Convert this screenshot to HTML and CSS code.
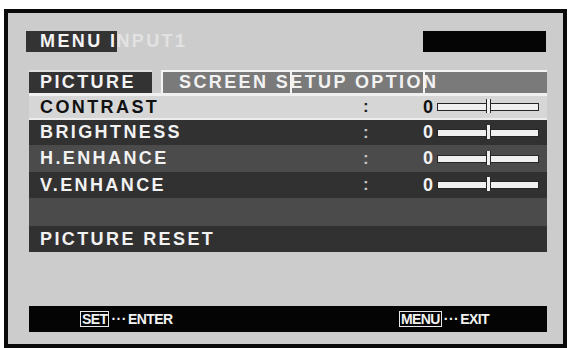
FILE: index.html
```html
<!DOCTYPE html>
<html>
<head>
<meta charset="utf-8">
<link rel="stylesheet" href="styles.css">
</head>
<body>
<div class="frame">
  <div class="header">
    <div class="title"><span class="title-on">MENU I</span><span class="title-off">NPUT1</span></div>
    <div class="blackbox"></div>
  </div>
  <div class="tabs">
    <div class="tab tab-active">PICTURE</div>
    <div class="tab-strip">
      <span class="strip-text">SCREEN SETUP OPTION</span>
      <span class="divider d1"></span>
      <span class="divider d2"></span>
    </div>
  </div>
  <div class="rows">
    <div class="row row-sel h24">
      <span class="label">CONTRAST</span><span class="colon">:</span><span class="val">0</span><span class="slider"><span class="thumb"></span></span>
    </div>
    <div class="row row-dark h25">
      <span class="label">BRIGHTNESS</span><span class="colon">:</span><span class="val">0</span><span class="slider"><span class="thumb"></span></span>
    </div>
    <div class="row row-mid h27">
      <span class="label">H.ENHANCE</span><span class="colon">:</span><span class="val">0</span><span class="slider"><span class="thumb"></span></span>
    </div>
    <div class="row row-dark h26">
      <span class="label">V.ENHANCE</span><span class="colon">:</span><span class="val">0</span><span class="slider"><span class="thumb"></span></span>
    </div>
    <div class="row row-mid h28"></div>
    <div class="row row-dark h26">
      <span class="label">PICTURE RESET</span>
    </div>
  </div>
  <div class="footer">
    <div class="hint"><span class="key">SET</span><span class="dots">···</span><span>ENTER</span></div>
    <div class="hint"><span class="key">MENU</span><span class="dots">···</span><span>EXIT</span></div>
  </div>
</div>
</body>
</html>
```
FILE: styles.css
```css
html, body {
  margin: 0;
  padding: 0;
  background: #ffffff;
}
body {
  width: 571px;
  height: 348px;
  overflow: hidden;
  font-family: "Liberation Sans", Arial, sans-serif;
}
.frame {
  margin: 9px 0 0 4px;
  width: 555px;
  height: 331px;
  border: 4px solid #0a0a0a;
  background: #cccccc;
  padding: 0;
  display: flex;
  flex-direction: column;
}
.header {
  margin: 18px 17px 0 18px;
  height: 21px;
  display: flex;
  justify-content: space-between;
  align-items: stretch;
}
.title {
  display: flex;
  align-items: stretch;
  font-size: 18px;
  font-weight: bold;
  letter-spacing: 2.4px;
  line-height: 21px;
}
.title-on {
  background: #333333;
  color: #f4f4f4;
  padding-left: 14px;
  margin-right: -1px;
}
.title-off {
  color: #e2e2e2;
}
.blackbox {
  width: 123px;
  background: #050505;
}
.tabs {
  margin: 18px 16px 0 21px;
  height: 23px;
  border-bottom: 3px solid #f0f0f0;
  display: flex;
  gap: 9px;
  font-size: 18px;
  font-weight: bold;
  letter-spacing: 2.4px;
  line-height: 21px;
}
.tab {
  color: #f4f4f4;
}
.tab-active {
  width: 112px;
  padding-left: 11px;
  background: #333333;
  border-top: 2px solid #dedede;
}
.tab-strip {
  flex: 1;
  position: relative;
  background: #7a7a7a;
  border-top: 2px solid #f4f4f4;
  border-left: 2px solid #f4f4f4;
  color: #f2f2f2;
  padding-left: 16px;
  white-space: nowrap;
  overflow: hidden;
}
.divider {
  position: absolute;
  top: 0;
  bottom: 0;
  width: 2px;
  background: #f4f4f4;
}
.d1 { left: 127px; }
.d2 { left: 260px; }
.rows {
  margin: 0 16px 0 21px;
  display: flex;
  flex-direction: column;
}
.row {
  display: flex;
  align-items: center;
  font-size: 18px;
  font-weight: bold;
  letter-spacing: 2.4px;
  color: #f2f2f2;
}
.h24 { height: 22px; }
.h25 { height: 25px; }
.h26 { height: 26px; }
.h27 { height: 27px; }
.h28 { height: 28px; }
.row-sel {
  background: #d6d6d6;
  color: #111111;
  border-bottom: 2px solid #ececec;
}
.row-dark {
  background: #313131;
}
.row-mid {
  background: #4b4b4b;
}
.label {
  width: 323px;
  padding-left: 11px;
  white-space: nowrap;
}
.colon {
  width: 60px;
  font-size: 17px;
  color: #c4c4c4;
}
.row-sel .colon {
  color: #222222;
}
.val {
  width: 14px;
  letter-spacing: 0;
}
.slider {
  position: relative;
  width: 100px;
  height: 6px;
  background: #f0f0f0;
  border: 1px solid #262626;
}
.thumb {
  position: absolute;
  left: 48px;
  top: -5px;
  width: 3px;
  height: 14px;
  background: #f0f0f0;
  border-left: 1px solid #262626;
  border-right: 1px solid #262626;
}
.footer {
  margin: 54px 16px 0 21px;
  height: 26px;
  background: #040404;
  display: flex;
  justify-content: space-between;
  align-items: center;
  padding: 0 58px 0 51px;
  color: #f2f2f2;
  font-size: 14px;
  font-weight: bold;
  letter-spacing: -0.6px;
}
.hint {
  display: flex;
  align-items: center;
}
.key {
  border: 1px solid #e8e8e8;
  padding: 0 1px 0 1px;
  line-height: 14px;
}
.dots {
  letter-spacing: 0.5px;
  padding: 0 1px 0 2px;
}
```
